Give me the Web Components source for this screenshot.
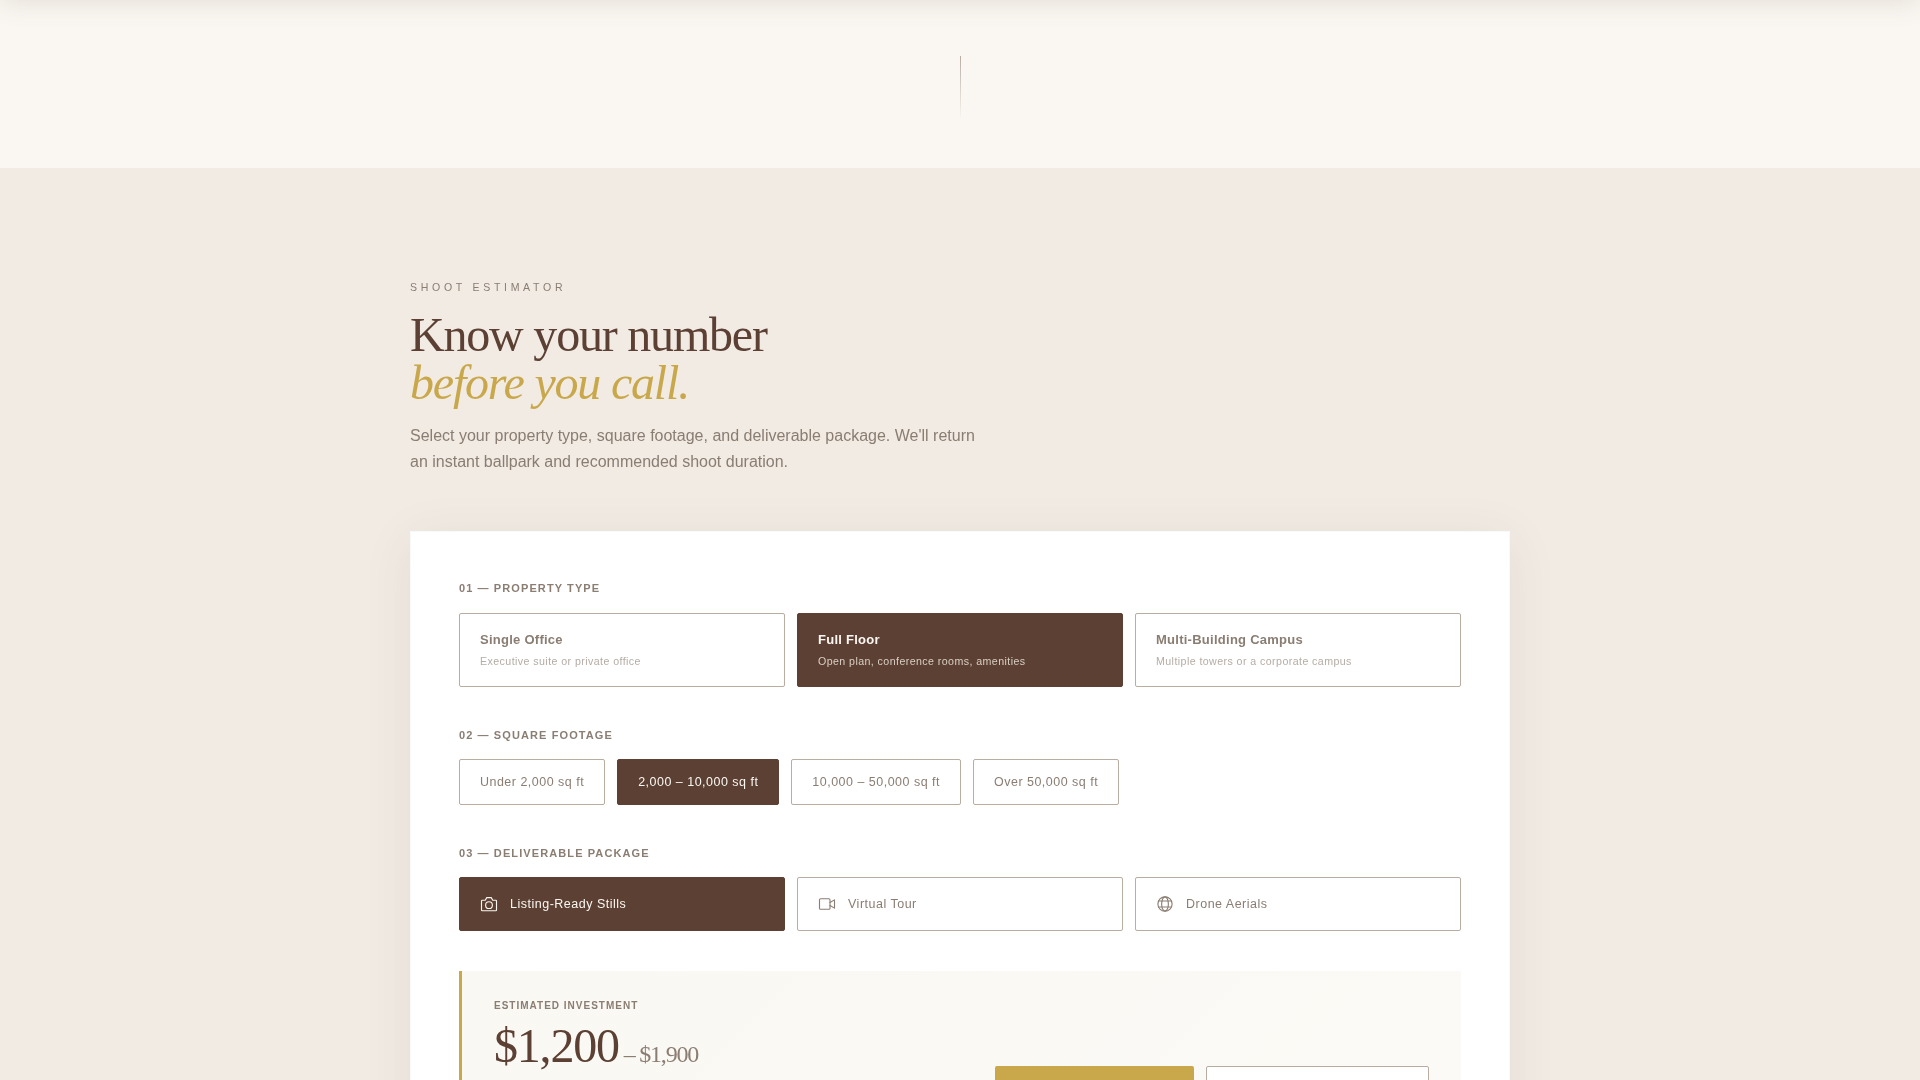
<!DOCTYPE html>
<html lang="en">
<head>
<meta charset="utf-8">
<title>Shoot Estimator</title>
<style>
  html, body { margin: 0; padding: 0; height: 1080px; overflow: hidden; }
  body { background: #f1ebe4; font-family: "Liberation Sans", Arial, sans-serif; color: #5c4033; }
</style>
</head>
<body>

<template id="tpl-top-band">
  <style>
    :host { display: block; height: 168px; background: #faf7f2; position: relative; overflow: hidden; }
    .shadow { position: absolute; left: 0; right: 0; top: -80px; height: 80px; box-shadow: 0 4px 24px rgba(92,64,51,.12); }
    .line { position: absolute; left: 960px; top: 56px; width: 1px; height: 64px; background: linear-gradient(to bottom, #b8ada0, rgba(184,173,160,0)); }
  </style>
  <div class="shadow"></div>
  <div class="line"></div>
</template>

<template id="tpl-estimator-section">
  <style>
    /* own layer, the text then gets grey antialiasing like the reference */
    :host { display: block; padding: 113px 410px 0; will-change: transform; }
    .eyebrow { font-size: 10.56px; letter-spacing: .35em; color: #8a7d72; line-height: 12px; margin-bottom: 18px; }
    h1 { margin: 0; font-family: "Liberation Serif", "Times New Roman", serif; font-weight: 400; font-size: 48px; line-height: 48px; letter-spacing: -.025em; color: #5c4033; }
    h1 em { color: #c9a84c; font-style: italic; display: block; }
    p { margin: 16px 0 56px; width: 580px; font-size: 16px; line-height: 26px; color: #8a7d72; }
  </style>
  <div class="eyebrow">SHOOT ESTIMATOR</div>
  <h1>Know your number<em>before you call.</em></h1>
  <p>Select your property type, square footage, and deliverable package. We'll return an instant ballpark and recommended shoot duration.</p>
  <slot></slot>
</template>

<template id="tpl-estimator-card">
  <style>
    :host { display: block; background: #fff; padding: 48px 48px 64px; box-shadow: 0 8px 48px rgba(92,64,51,.08); border: 1px solid rgba(92,64,51,.03); }
  </style>
  <slot></slot>
</template>

<template id="tpl-step-group">
  <style>
    :host { display: block; margin-bottom: 40px; }
    .label { font-size: 11px; font-weight: 700; letter-spacing: .1em; line-height: 16px; color: #8a7d72; margin-bottom: 16px; text-transform: uppercase; }
    :host([first]) .label { margin-bottom: 17px; }
    .items { display: flex; gap: 12px; }
    :host([grid]) .items { display: grid; grid-template-columns: repeat(3, 1fr); }
  </style>
  <div class="label"><slot name="label"></slot></div>
  <div class="items"><slot></slot></div>
</template>

<template id="tpl-type-option">
  <style>
    :host { display: block; box-sizing: border-box; height: 74px; padding: 18px 20px 0; border: 1px solid #b8ada0; border-radius: 2px; background: #fff; }
    :host([active]) { background: #5c4033; border-color: #5c4033; }
    .t { font-size: 13px; font-weight: 700; letter-spacing: .02em; line-height: 16px; color: #8a7d72; margin-bottom: 6px; }
    .s { font-size: 10.64px; letter-spacing: .04em; line-height: 14px; color: #b5aca5; }
    :host([active]) .t { color: #faf7f2; }
    :host([active]) .s { color: #d9cfc4; }
  </style>
  <div class="t"><slot name="title"></slot></div>
  <div class="s"><slot name="sub"></slot></div>
</template>

<template id="tpl-size-pill">
  <style>
    :host { display: block; box-sizing: border-box; height: 46px; padding: 0 20px; line-height: 44px; border: 1px solid #b8ada0; border-radius: 2px; background: #fff; font-size: 12.48px; letter-spacing: .04em; color: #8a7d72; white-space: nowrap; }
    :host([active]) { background: #5c4033; border-color: #5c4033; color: #faf7f2; }
  </style>
  <slot></slot>
</template>

<template id="tpl-package-option">
  <style>
    :host { display: flex; box-sizing: border-box; align-items: center; gap: 12px; height: 54px; padding: 0 20px; border: 1px solid #b8ada0; border-radius: 2px; background: #fff; font-size: 12.5px; letter-spacing: .04em; color: #8a7d72; }
    :host([active]) { background: #5c4033; border-color: #5c4033; color: #faf7f2; }
    ::slotted(svg) { width: 18px; height: 18px; flex: none; }
  </style>
  <slot name="icon"></slot>
  <slot></slot>
</template>

<template id="tpl-estimate-panel">
  <style>
    :host { display: flex; justify-content: space-between; background: linear-gradient(135deg, #faf8f3, #fbfaf6); border-left: 3px solid #c9a84c; padding: 28px 32px 32px; height: 200px; box-sizing: border-box; }
    .lab { font-size: 10px; font-weight: 700; letter-spacing: .1em; line-height: 14px; color: #8a7d72; margin-bottom: 5px; }
    .price { font-family: "Liberation Serif", "Times New Roman", serif; font-size: 48px; line-height: 56px; letter-spacing: -.025em; color: #5c4033; }
    .price span { font-size: 24px; color: #8a7d72; }
    .btns { display: flex; gap: 12px; margin-top: 67px; }
    .btn { box-sizing: border-box; height: 48px; border-radius: 2px; }
    .gold { width: 199px; background: #c9a84c; }
    .ghost { width: 223px; background: #fff; border: 1px solid #b8ada0; }
  </style>
  <div>
    <div class="lab">ESTIMATED INVESTMENT</div>
    <div class="price"><slot name="low"></slot><span> <slot name="high"></slot></span></div>
  </div>
  <div class="btns">
    <div class="btn gold"></div>
    <div class="btn ghost"></div>
  </div>
</template>

<top-band></top-band>
<estimator-section>
  <estimator-card>
    <step-group grid first>
      <span slot="label">01 — Property Type</span>
      <type-option><span slot="title">Single Office</span><span slot="sub">Executive suite or private office</span></type-option>
      <type-option active><span slot="title">Full Floor</span><span slot="sub">Open plan, conference rooms, amenities</span></type-option>
      <type-option><span slot="title">Multi-Building Campus</span><span slot="sub">Multiple towers or a corporate campus</span></type-option>
    </step-group>
    <step-group>
      <span slot="label">02 — Square Footage</span>
      <size-pill>Under 2,000 sq ft</size-pill>
      <size-pill active>2,000 – 10,000 sq ft</size-pill>
      <size-pill>10,000 – 50,000 sq ft</size-pill>
      <size-pill>Over 50,000 sq ft</size-pill>
    </step-group>
    <step-group grid>
      <span slot="label">03 — Deliverable Package</span>
      <package-option active>
        <svg slot="icon" viewBox="0 0 24 24" fill="none" stroke="currentColor" stroke-width="1.5" stroke-linecap="round" stroke-linejoin="round"><path d="M3 7h4l2-3.5h6L17 7h4a1 1 0 0 1 1 1v12a1 1 0 0 1-1 1H3a1 1 0 0 1-1-1V8a1 1 0 0 1 1-1z"/><circle cx="12" cy="13.5" r="4.5"/></svg>
        Listing-Ready Stills
      </package-option>
      <package-option>
        <svg slot="icon" viewBox="0 0 24 24" fill="none" stroke="currentColor" stroke-width="1.5" stroke-linecap="round" stroke-linejoin="round"><rect x="2" y="5" width="14" height="14" rx="1.5"/><path d="M16 10l6-3.5v11L16 14"/></svg>
        Virtual Tour
      </package-option>
      <package-option>
        <svg slot="icon" viewBox="0 0 24 24" fill="none" stroke="currentColor" stroke-width="1.5" stroke-linecap="round" stroke-linejoin="round"><circle cx="12" cy="12" r="9.5"/><ellipse cx="12" cy="12" rx="4.5" ry="9.5"/><path d="M3.5 8h17M3.5 16h17"/></svg>
        Drone Aerials
      </package-option>
    </step-group>
    <estimate-panel><span slot="low">$1,200</span><span slot="high">– $1,900</span></estimate-panel>
  </estimator-card>
</estimator-section>

<script>
'use strict';

// all the elements are the same: clone the template into an open shadow root
function defineFromTemplate(tag, id) {
  customElements.define(tag, class extends HTMLElement {
    constructor() {
      super();
      const shadowRoot = this.attachShadow({mode: 'open'});
      shadowRoot.appendChild(document.getElementById(id).content.cloneNode(true));
    }
  });
}

defineFromTemplate('top-band', 'tpl-top-band');
defineFromTemplate('estimator-section', 'tpl-estimator-section');
defineFromTemplate('estimator-card', 'tpl-estimator-card');
defineFromTemplate('step-group', 'tpl-step-group');
defineFromTemplate('type-option', 'tpl-type-option');
defineFromTemplate('size-pill', 'tpl-size-pill');
defineFromTemplate('package-option', 'tpl-package-option');
defineFromTemplate('estimate-panel', 'tpl-estimate-panel');
</script>
</body>
</html>
